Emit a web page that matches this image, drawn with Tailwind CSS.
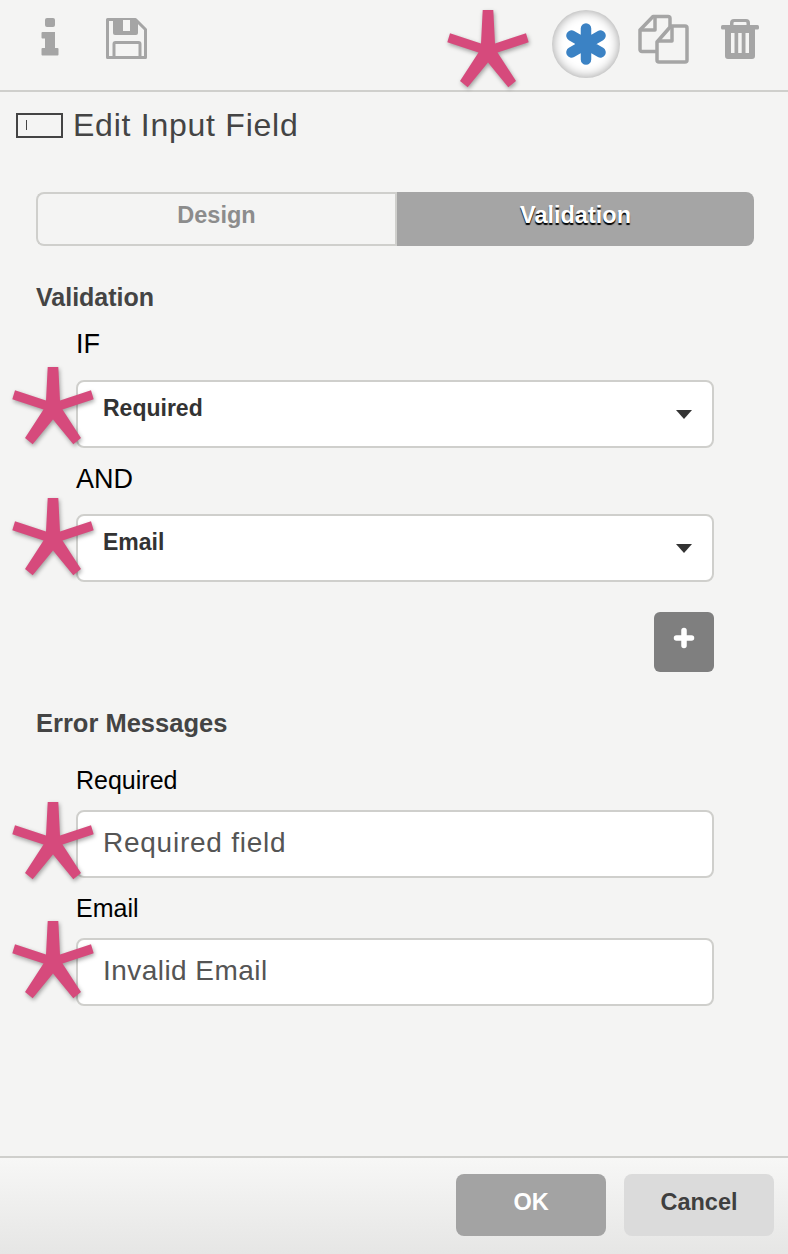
<!DOCTYPE html>
<html lang="en">
<head>
  <meta charset="UTF-8" />
  <meta name="viewport" content="width=device-width, initial-scale=1.0" />
  <title>Edit Input Field</title>
  <script src="https://cdn.jsdelivr.net/npm/@tailwindcss/browser@4"></script>
</head>
<body class="bg-[#f4f4f3] font-['Liberation_Sans',Arial,sans-serif] text-[#444]">
  <div class="flex h-[1254px] w-[788px] flex-col overflow-hidden">

    <!-- toolbar -->
    <header class="relative flex h-[92px] shrink-0 border-b-2 border-[#cfcfcc]">
      <svg class="mt-[18px] ml-[41px] h-[38px] w-[18px]" viewBox="0 0 18 38" fill="#a5a5a5">
        <rect x="4" y="0" width="10" height="9" rx="2"/>
        <path d="M1.500 14H14v16h2.500a1 1 0 0 1 1 1v5.500a1 1 0 0 1-1 1H1.500a1 1 0 0 1-1-1V31a1 1 0 0 1 1-1H4V20.500H1.500a1 1 0 0 1-1-1V15a1 1 0 0 1 1-1z"/>
      </svg>
      <svg class="mt-[18px] ml-[47px] h-[41px] w-[41px]" viewBox="0 0 41 41" fill="none" stroke="#a5a5a5" stroke-width="3" stroke-linejoin="round">
        <path d="M1.500 1.500h28l10 10v28H1.500z"/>
        <path d="M8 40V26a1.500 1.500 0 0 1 1.500-1.500h23a1.500 1.500 0 0 1 1.500 1.500v14"/>
        <path fill="#a5a5a5" stroke="none" d="M7 2h25v13a2 2 0 0 1-2 2H9a2 2 0 0 1-2-2z"/>
        <rect x="17" y="2" width="7" height="11" fill="#f4f4f3" stroke="none"/>
      </svg>

      <svg class="absolute top-[9px] left-[446px] h-[80px] w-[84px] drop-shadow-[1px_2px_2px_rgba(0,0,0,0.35)]" viewBox="0 0 84 80" fill="#d64a7c">
        <path d="M36.700 1H47.300L49 34.500L80 24.300L82.700 33.300L51.500 43.500L70 72L62.300 78.300L42 53.500L21.700 78.300L14 72L32.500 43.500L1.300 33.300L4 24.300L35 34.500z"/>
      </svg>

      <div class="absolute top-[10px] left-[552px] flex h-[68px] w-[68px] items-center justify-center rounded-full bg-white shadow-[inset_0_0_12px_rgba(0,0,0,0.4)]">
        <svg class="h-[42px] w-[40px]" viewBox="0 0 40 42" fill="none" stroke="#3b82c4" stroke-width="10.500" stroke-linecap="round">
          <path d="M20 5.500V36.500M5.500 12.600L34.500 29.400M34.500 12.600L5.500 29.400"/>
        </svg>
      </div>

      <svg class="absolute top-[14px] left-[638px] h-[50px] w-[51px]" viewBox="0 0 51 50" fill="none" stroke="#a5a5a5" stroke-width="3.500" stroke-linejoin="round">
        <path d="M19 37.500H4a2 2 0 0 1-2-2V16L15 2.500h15a2 2 0 0 1 2 2v8"/>
        <path d="M17 3v13H2"/>
        <path d="M19 28L33 12h14a2 2 0 0 1 2 2v32a2 2 0 0 1-2 2H21a2 2 0 0 1-2-2z"/>
        <path d="M34 12v15H19"/>
      </svg>

      <svg class="absolute top-[18px] left-[721px] h-[41px] w-[38px]" viewBox="0 0 38 41" fill="#a5a5a5">
        <path d="M9 7V5a4 4 0 0 1 4-4h12a4 4 0 0 1 4 4v2h-3.500V5a1 1 0 0 0-1-1H13.500a1 1 0 0 0-1 1v2z"/>
        <rect x="0" y="7" width="38" height="4.500" rx="1.500"/>
        <path fill-rule="evenodd" d="M4 11h30v27a3 3 0 0 1-3 3H7a3 3 0 0 1-3-3zM10 15v20h3.500V15zM17.200 15v20h3.500V15zM24.500 15v20H28V15z"/>
      </svg>
    </header>

    <!-- title -->
    <div class="mt-[15px] flex h-[36px] items-center pl-[16px]">
      <span class="flex h-[25px] w-[47px] items-center border-[2px] border-[#444] pl-[8px]">
        <span class="h-[10px] w-px bg-[#444]"></span>
      </span>
      <h1 class="ml-[10px] text-[32px] leading-none tracking-[0.75px] text-[#444]">Edit Input Field</h1>
    </div>

    <!-- tabs -->
    <div class="mt-[49px] ml-[36px] flex h-[54px] w-[718px] text-[23.5px] leading-none font-bold">
      <div class="flex w-[359px] items-center justify-center rounded-l-[8px] border-2 border-r-0 border-[#cfcfcc] pb-[6px] text-[#8c8c8c]">Design</div>
      <div class="flex flex-1 items-center justify-center rounded-r-[8px] border-l-2 border-[#cfcfcc] bg-[#a5a5a5] pb-[6px] text-white [text-shadow:0_2px_1px_#000]">Validation</div>
    </div>

    <!-- validation rules -->
    <section class="mt-[37px] pl-[36px]">
      <h2 class="text-[25px] leading-[28px] font-bold text-[#444]">Validation</h2>
      <p class="mt-[18px] pl-[40px] text-[27px] leading-[30px] text-black">IF</p>
      <div class="relative mt-[21px] ml-[40px] h-[68px] w-[638px] rounded-[8px] border-2 border-[#cfcfcc] bg-white pt-[13px] pl-[25px] text-[23px] leading-[26px] font-bold text-[#333]">
        Required
        <svg class="absolute top-[28px] right-[20px] h-[9px] w-[16px]" viewBox="0 0 16 9" fill="#333"><path d="M0 0h16L8 9z"/></svg>
        <svg class="absolute top-[-16px] left-[-67px] h-[80px] w-[84px] drop-shadow-[1px_2px_2px_rgba(0,0,0,0.35)]" viewBox="0 0 84 80" fill="#d64a7c">
          <path d="M36.700 1H47.300L49 34.500L80 24.300L82.700 33.300L51.500 43.500L70 72L62.300 78.300L42 53.500L21.700 78.300L14 72L32.500 43.500L1.300 33.300L4 24.300L35 34.500z"/>
        </svg>
      </div>
      <p class="mt-[16px] pl-[40px] text-[27px] leading-[30px] text-black">AND</p>
      <div class="relative mt-[20px] ml-[40px] h-[68px] w-[638px] rounded-[8px] border-2 border-[#cfcfcc] bg-white pt-[13px] pl-[25px] text-[23px] leading-[26px] font-bold text-[#333]">
        Email
        <svg class="absolute top-[28px] right-[20px] h-[9px] w-[16px]" viewBox="0 0 16 9" fill="#333"><path d="M0 0h16L8 9z"/></svg>
        <svg class="absolute top-[-19px] left-[-67px] h-[80px] w-[84px] drop-shadow-[1px_2px_2px_rgba(0,0,0,0.35)]" viewBox="0 0 84 80" fill="#d64a7c">
          <path d="M36.700 1H47.300L49 34.500L80 24.300L82.700 33.300L51.500 43.500L70 72L62.300 78.300L42 53.500L21.700 78.300L14 72L32.500 43.500L1.300 33.300L4 24.300L35 34.500z"/>
        </svg>
      </div>
      <div class="mt-[30px] ml-[618px] flex h-[60px] w-[60px] items-start justify-center rounded-[6px] bg-[#7f7f7f] pt-[15px]">
        <svg class="h-[22px] w-[22px]" viewBox="0 0 22 22" fill="none" stroke="#fff" stroke-width="5.500" stroke-linecap="round"><path d="M11 3.500V18.500M3.500 11H18.500"/></svg>
      </div>
    </section>

    <!-- error messages -->
    <section class="mt-[37px] pl-[36px]">
      <h2 class="text-[25.500px] leading-[28px] font-bold text-[#444]">Error Messages</h2>
      <p class="mt-[29px] pl-[40px] text-[25px] leading-[28px] text-black">Required</p>
      <div class="relative mt-[16px] ml-[40px] flex h-[68px] w-[638px] items-center rounded-[8px] border-2 border-[#cfcfcc] bg-white pb-[2px] pl-[25px] text-[28px] tracking-[0.75px] text-[#555]">
        Required field
        <svg class="absolute top-[-11px] left-[-67px] h-[80px] w-[84px] drop-shadow-[1px_2px_2px_rgba(0,0,0,0.35)]" viewBox="0 0 84 80" fill="#d64a7c">
          <path d="M36.700 1H47.300L49 34.500L80 24.300L82.700 33.300L51.500 43.500L70 72L62.300 78.300L42 53.500L21.700 78.300L14 72L32.500 43.500L1.300 33.300L4 24.300L35 34.500z"/>
        </svg>
      </div>
      <p class="mt-[16px] pl-[40px] text-[25px] leading-[28px] text-black">Email</p>
      <div class="relative mt-[16px] ml-[40px] flex h-[68px] w-[638px] items-center rounded-[8px] border-2 border-[#cfcfcc] bg-white pb-[2px] pl-[25px] text-[28px] tracking-[0.45px] text-[#555]">
        Invalid Email
        <svg class="absolute top-[-20px] left-[-67px] h-[80px] w-[84px] drop-shadow-[1px_2px_2px_rgba(0,0,0,0.35)]" viewBox="0 0 84 80" fill="#d64a7c">
          <path d="M36.700 1H47.300L49 34.500L80 24.300L82.700 33.300L51.500 43.500L70 72L62.300 78.300L42 53.500L21.700 78.300L14 72L32.500 43.500L1.300 33.300L4 24.300L35 34.500z"/>
        </svg>
      </div>
    </section>

    <!-- footer -->
    <footer class="mt-auto flex h-[98px] justify-end gap-[18px] border-t-2 border-[#cfcfcc] bg-gradient-to-b from-[#f7f7f6] to-[#e6e6e5] pt-[16px] pr-[14px]">
      <button class="h-[62px] w-[150px] rounded-[8px] bg-[#a3a3a3] pb-[5px] text-[23.500px] font-bold text-white">OK</button>
      <button class="h-[62px] w-[150px] rounded-[8px] bg-[#dbdbdb] pb-[5px] text-[23.500px] font-bold text-[#3f3f3f]">Cancel</button>
    </footer>
  </div>
</body>
</html>
